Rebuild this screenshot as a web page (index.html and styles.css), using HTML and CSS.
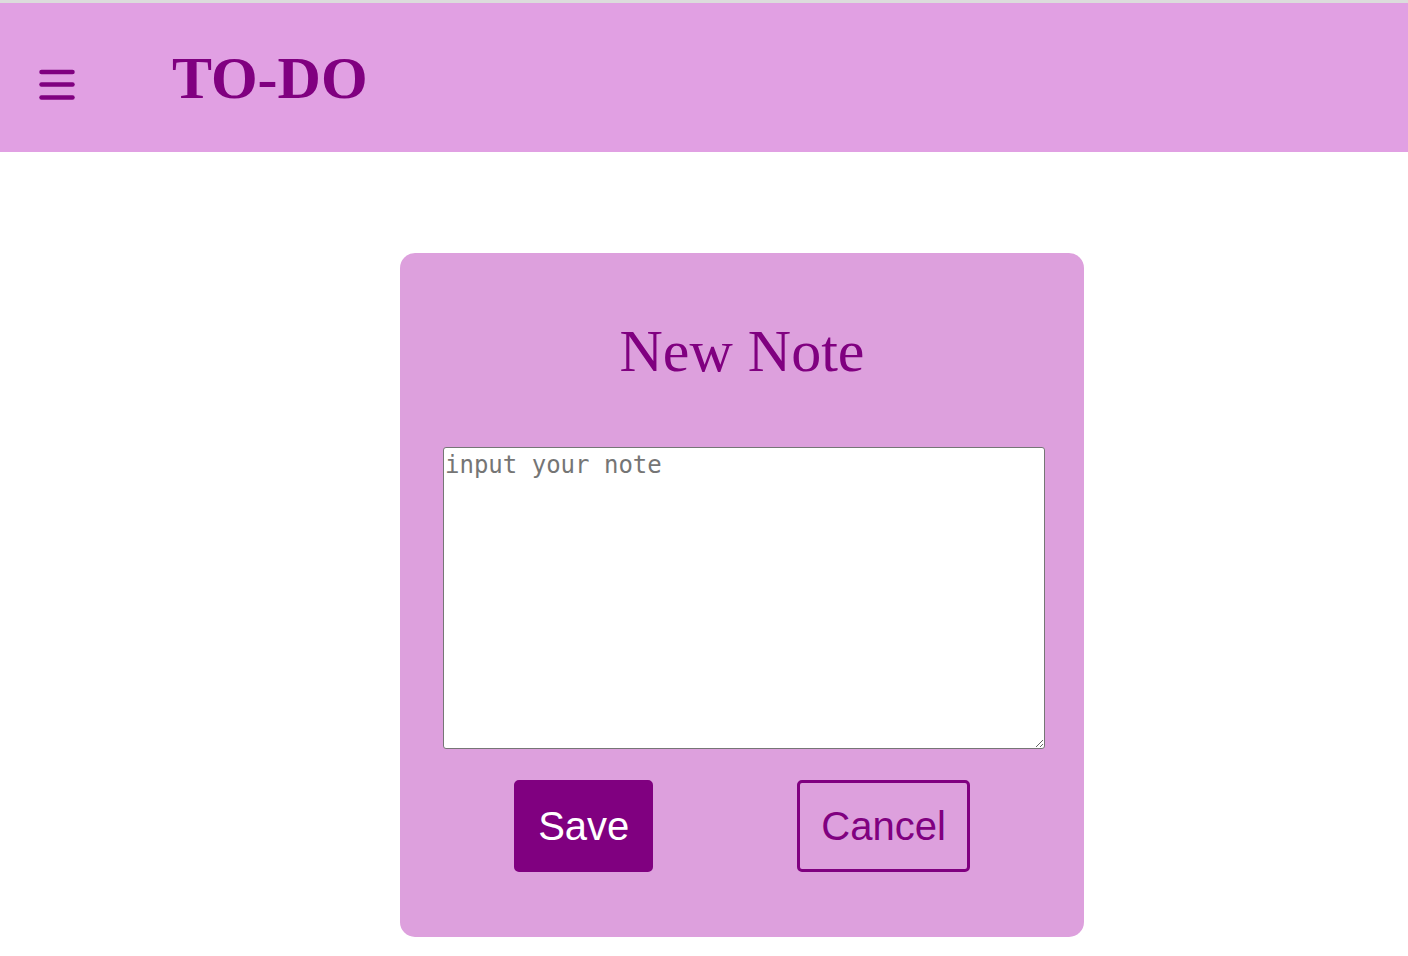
FILE: index.html
```html
<!DOCTYPE html>
<html>
<head>
<meta charset="utf-8">
<title>TO-DO</title>
<link rel="stylesheet" href="styles.css">
</head>
<body>
<div class="topline"></div>
<header class="header">
  <button class="menu" aria-label="menu">
    <svg width="36" height="32" viewBox="0 0 36 32"><g stroke="#800080" stroke-width="4.5" stroke-linecap="round"><line x1="2.5" y1="3" x2="33.5" y2="3"/><line x1="2.5" y1="15.5" x2="33.5" y2="15.5"/><line x1="2.5" y1="28.5" x2="33.5" y2="28.5"/></g></svg>
  </button>
  <h1 class="brand">TO-DO</h1>
</header>
<main class="main">
  <section class="card">
    <h2 class="card-title">New Note</h2>
    <textarea class="note" placeholder="input your note"></textarea>
    <div class="actions">
      <button class="btn btn-save">Save</button>
      <button class="btn btn-cancel">Cancel</button>
    </div>
  </section>
</main>
</body>
</html>
```
FILE: styles.css
```css
html, body {
  margin: 0;
  padding: 0;
  background: #ffffff;
}
.topline {
  height: 3px;
  background: #dcdcdc;
}
.header {
  height: 149px;
  background: #e1a0e3;
  display: flex;
  align-items: center;
}
.menu {
  background: none;
  border: none;
  padding: 0;
  margin: 14px 0 0 39px;
  display: flex;
}
.brand {
  margin: 0 0 0 97px;
  font-family: "Liberation Serif", "Times New Roman", serif;
  font-weight: bold;
  font-size: 60px;
  color: #800080;
  line-height: 1;
  padding-top: 1px;
}
.main {
  display: flex;
  justify-content: center;
  padding-top: 101px;
  padding-left: 76px;
}
.card {
  width: 684px;
  height: 684px;
  box-sizing: border-box;
  background: #dda0dd;
  border-radius: 15px;
  display: flex;
  flex-direction: column;
}
.card-title {
  margin: 0;
  padding-top: 64px;
  text-align: center;
  font-family: "Liberation Serif", "Times New Roman", serif;
  font-weight: normal;
  font-size: 60px;
  line-height: 69px;
  color: #800080;
}
.note {
  margin: 61px 0 0 43px;
  width: 602px;
  height: 302px;
  box-sizing: border-box;
  border: 1px solid #767676;
  border-radius: 3px;
  padding: 3px 1px;
  font-family: "DejaVu Sans Mono", monospace;
  font-size: 24px;
  background: #fff;
  resize: both;
}
.note::placeholder {
  color: #757575;
}
.actions {
  display: flex;
  justify-content: center;
  gap: 144px;
  margin-top: 31px;
}
.btn {
  font-family: "Liberation Sans", Arial, sans-serif;
  font-size: 40px;
  line-height: 46px;
  height: 92px;
  box-sizing: border-box;
  padding: 20px 21px;
  border: 3px solid #800080;
  border-radius: 5px;
  cursor: pointer;
}
.btn-save {
  background: #800080;
  color: #ffffff;
}
.btn-cancel {
  background: transparent;
  color: #800080;
}
```
